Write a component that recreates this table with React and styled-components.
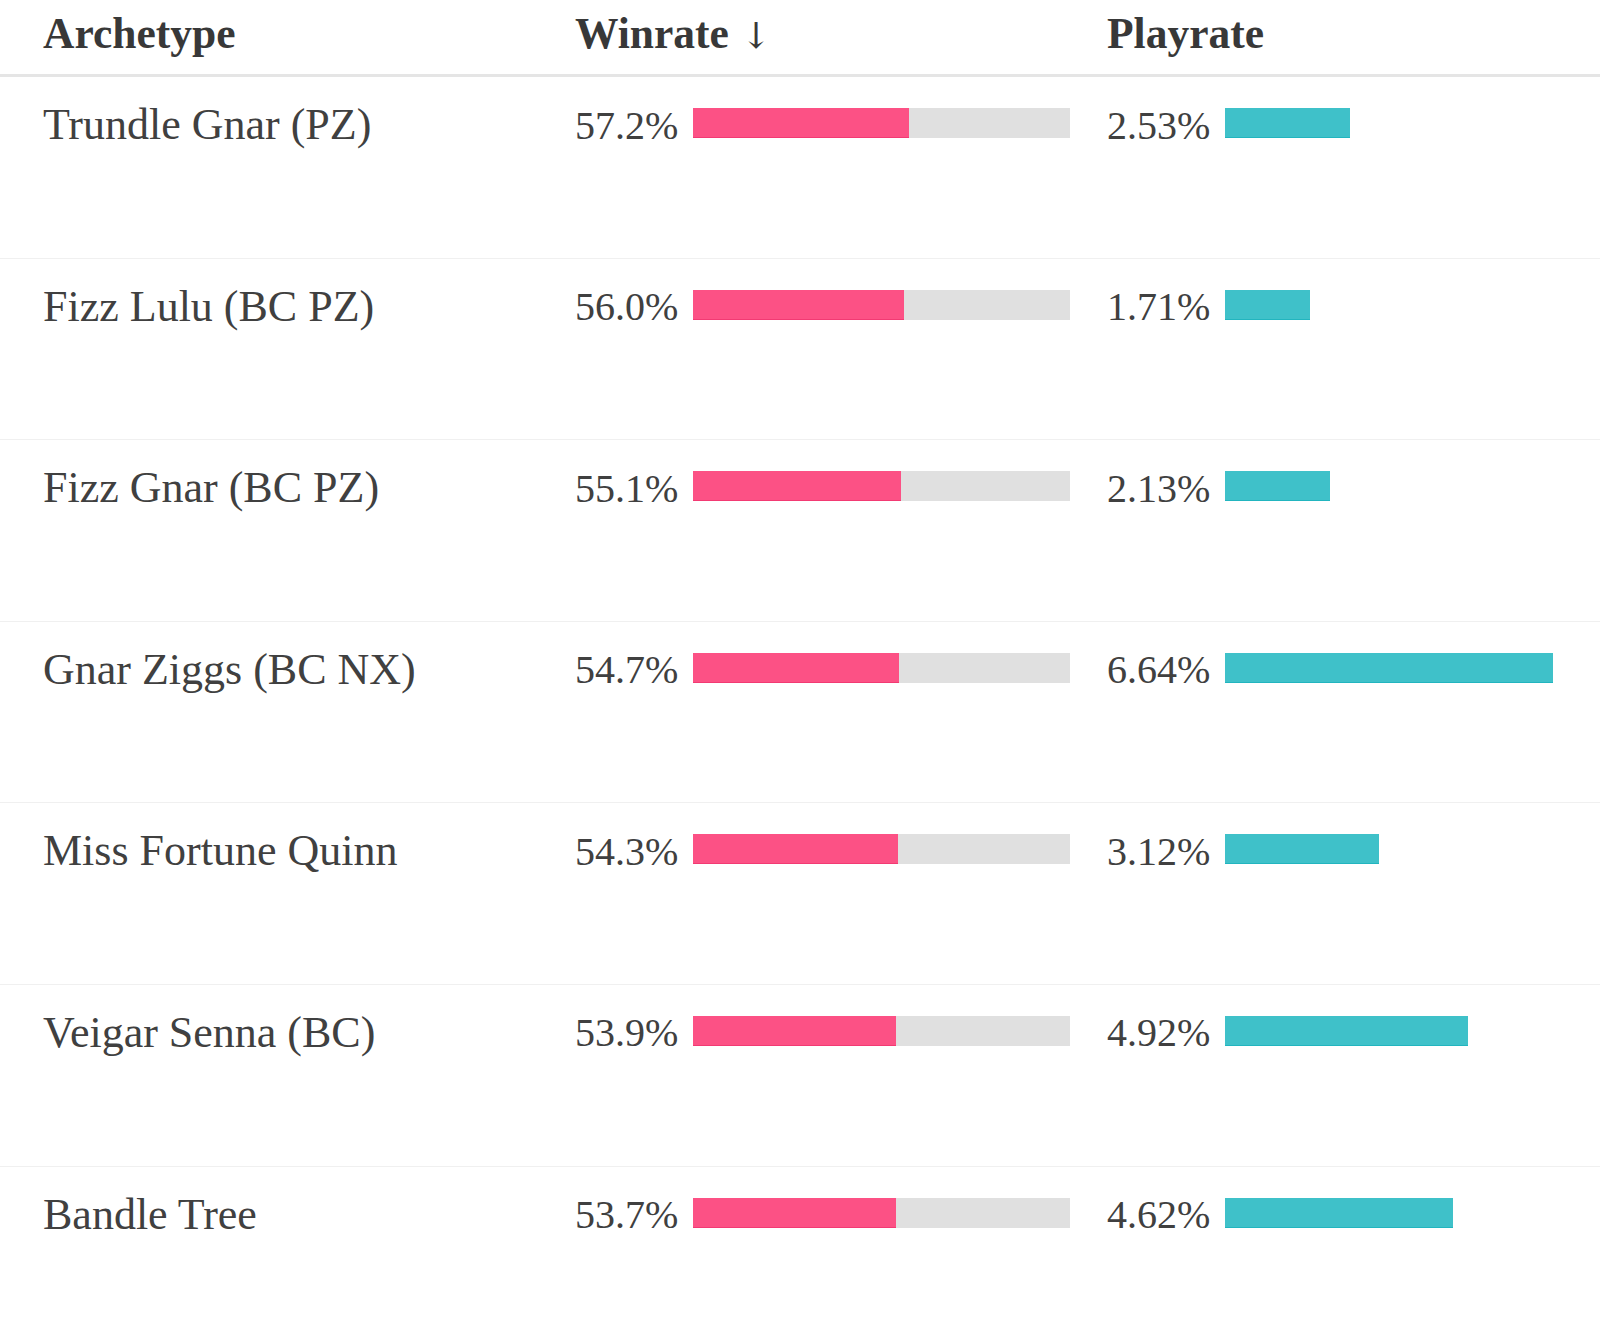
import React from "react";
import styled, { createGlobalStyle } from "styled-components";

const GlobalStyle = createGlobalStyle`
  html, body {
    margin: 0;
    padding: 0;
    background: #ffffff;
  }
  body {
    font-family: "Liberation Serif", "Times New Roman", serif;
    color: #404040;
  }
`;

const Table = styled.div`
  width: 1600px;
`;

const Row = styled.div`
  display: grid;
  grid-template-columns: 533px 537px 1fr;
  height: ${(p) => (p.head ? "74px" : "180.6px")};
  border-bottom: ${(p) => (p.head ? "3px solid #e5e5e5" : "1px solid #f0f0f0")};
`;

const HeadCell = styled.div`
  padding: 12px 0 0 ${(p) => p.left || 43}px;
  font-size: 43.5px;
  line-height: 1;
  font-weight: 700;
  color: #383838;
`;

const Arrow = styled.span`
  font-weight: 400;
  font-family: "DejaVu Serif", serif;
  font-size: 36px;
  margin-left: 12px;
`;

const NameCell = styled.div`
  padding: 26px 0 0 43px;
  font-size: 44px;
  line-height: 1;
  white-space: nowrap;
`;

const StatCell = styled.div`
  display: flex;
  align-items: flex-start;
  padding: 31px ${(p) => p.right || 0}px 0 ${(p) => p.left}px;
`;

const Value = styled.span`
  font-size: 40px;
  line-height: 30px;
  margin-top: 2.5px;
  margin-right: 15px;
  white-space: nowrap;
`;

const Track = styled.div`
  flex: 1;
  height: 30px;
  background: ${(p) => (p.grey ? "#e0e0e0" : "transparent")};
  display: flex;
`;

const Fill = styled.div`
  height: 30px;
  box-sizing: border-box;
  background: ${(p) => p.color};
  border-bottom: 1px solid ${(p) => p.edge};
`;

const rows = [
  { name: "Trundle Gnar (PZ)", win: 57.2, play: 2.53 },
  { name: "Fizz Lulu (BC PZ)", win: 56.0, play: 1.71 },
  { name: "Fizz Gnar (BC PZ)", win: 55.1, play: 2.13 },
  { name: "Gnar Ziggs (BC NX)", win: 54.7, play: 6.64 },
  { name: "Miss Fortune Quinn", win: 54.3, play: 3.12 },
  { name: "Veigar Senna (BC)", win: 53.9, play: 4.92 },
  { name: "Bandle Tree", win: 53.7, play: 4.62 },
];

const maxPlay = Math.max(...rows.map((r) => r.play));

export default function App() {
  return (
    <>
      <GlobalStyle />
      <Table>
        <Row head>
          <HeadCell>Archetype</HeadCell>
          <HeadCell left={42}>
            Winrate<Arrow>↓</Arrow>
          </HeadCell>
          <HeadCell left={37}>Playrate</HeadCell>
        </Row>
        {rows.map((r) => (
          <Row key={r.name}>
            <NameCell>{r.name}</NameCell>
            <StatCell left={42}>
              <Value>{r.win.toFixed(1)}%</Value>
              <Track grey>
                <Fill color="#fc5185" edge="#f23a73" style={{ width: `${r.win}%` }} />
              </Track>
            </StatCell>
            <StatCell left={37} right={47}>
              <Value>{r.play.toFixed(2)}%</Value>
              <Track>
                <Fill color="#3fc1c9" edge="#22b5bf" style={{ width: `${(r.play / maxPlay) * 100}%` }} />
              </Track>
            </StatCell>
          </Row>
        ))}
      </Table>
    </>
  );
}
